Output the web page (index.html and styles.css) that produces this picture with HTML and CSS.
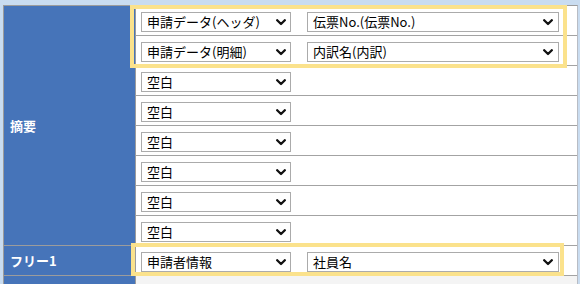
FILE: index.html
```html
<!DOCTYPE html>
<html lang="ja">
<head>
<meta charset="utf-8">
<link rel="stylesheet" href="styles.css">
</head>
<body>
<div class="page">
  <div class="sheet">
    <div class="label span8">摘要</div>
    <div class="cell">
      <div class="sel w1"><span>申請データ(ヘッダ)</span><svg class="chev" viewBox="0 0 10 7" width="10" height="7"><polyline points="1.2,1.2 5,5 8.8,1.2"/></svg></div>
      <div class="sel w2"><span>伝票No.(伝票No.)</span><svg class="chev" viewBox="0 0 10 7" width="10" height="7"><polyline points="1.2,1.2 5,5 8.8,1.2"/></svg></div>
    </div>
    <div class="cell">
      <div class="sel w1"><span>申請データ(明細)</span><svg class="chev" viewBox="0 0 10 7" width="10" height="7"><polyline points="1.2,1.2 5,5 8.8,1.2"/></svg></div>
      <div class="sel w2"><span>内訳名(内訳)</span><svg class="chev" viewBox="0 0 10 7" width="10" height="7"><polyline points="1.2,1.2 5,5 8.8,1.2"/></svg></div>
    </div>
    <div class="cell">
      <div class="sel w1"><span>空白</span><svg class="chev" viewBox="0 0 10 7" width="10" height="7"><polyline points="1.2,1.2 5,5 8.8,1.2"/></svg></div>
    </div>
    <div class="cell">
      <div class="sel w1"><span>空白</span><svg class="chev" viewBox="0 0 10 7" width="10" height="7"><polyline points="1.2,1.2 5,5 8.8,1.2"/></svg></div>
    </div>
    <div class="cell">
      <div class="sel w1"><span>空白</span><svg class="chev" viewBox="0 0 10 7" width="10" height="7"><polyline points="1.2,1.2 5,5 8.8,1.2"/></svg></div>
    </div>
    <div class="cell">
      <div class="sel w1"><span>空白</span><svg class="chev" viewBox="0 0 10 7" width="10" height="7"><polyline points="1.2,1.2 5,5 8.8,1.2"/></svg></div>
    </div>
    <div class="cell">
      <div class="sel w1"><span>空白</span><svg class="chev" viewBox="0 0 10 7" width="10" height="7"><polyline points="1.2,1.2 5,5 8.8,1.2"/></svg></div>
    </div>
    <div class="cell">
      <div class="sel w1"><span>空白</span><svg class="chev" viewBox="0 0 10 7" width="10" height="7"><polyline points="1.2,1.2 5,5 8.8,1.2"/></svg></div>
    </div>
    <div class="label">フリー1</div>
    <div class="cell">
      <div class="sel w1"><span>申請者情報</span><svg class="chev" viewBox="0 0 10 7" width="10" height="7"><polyline points="1.2,1.2 5,5 8.8,1.2"/></svg></div>
      <div class="sel w2"><span>社員名</span><svg class="chev" viewBox="0 0 10 7" width="10" height="7"><polyline points="1.2,1.2 5,5 8.8,1.2"/></svg></div>
    </div>
    <div class="label tail"></div>
    <div class="cell empty"></div>
  </div>
  <div class="hl hl1"></div>
  <div class="hl hl2"></div>
</div>
</body>
</html>
```

FILE: styles.css
```css
html, body {
  margin: 0;
  padding: 0;
}
body {
  background: #c9dcf0;
  font-family: "Noto Sans CJK JP", "Noto Sans", sans-serif;
  font-size: 13px;
  color: #111;
  overflow: hidden;
}
.page {
  position: relative;
  padding: 5px 2px 0 3px;
  height: 284px;
  box-sizing: border-box;
  overflow: hidden;
}
.sheet {
  display: grid;
  grid-template-columns: 132px 1fr;
  grid-template-rows: repeat(9, 30px) 9px;
  width: 575px;
  box-sizing: border-box;
  border-top: 1px solid #9c9c9c;
  border-left: 1px solid #9c9c9c;
  border-right: 1px solid #b8bcc4;
  background: #fff;
}
.label {
  background: #4674b9;
  color: #fff;
  font-weight: bold;
  display: flex;
  align-items: center;
  padding-left: 6px;
  border-right: 1px solid #9c9c9c;
  border-bottom: 1px solid #9c9c9c;
  box-sizing: border-box;
}
.label.tail {
  border-bottom: none;
}
.span8 {
  grid-row: span 8;
}
.cell {
  display: flex;
  align-items: flex-start;
  gap: 16px;
  padding: 6px 0 0 5px;
  border-bottom: 1px solid #a3a3a3;
  box-sizing: border-box;
}
.cell.empty {
  background: #f4f4f4;
  border-bottom: none;
  padding: 0;
}
.sel {
  height: 20px;
  box-sizing: border-box;
  border: 1px solid #ababab;
  background: #fff;
  display: flex;
  align-items: center;
  justify-content: space-between;
  padding: 0 4px 0 5px;
  line-height: 18px;
  color: #000;
}
.w1 { width: 150px; }
.w2 { width: 252px; }
.w2 .chev { margin-right: 1px; }
.chev {
  flex: none;
}
.chev polyline {
  fill: none;
  stroke: #111;
  stroke-width: 2.3;
  stroke-linecap: round;
  stroke-linejoin: round;
}
.hl {
  position: absolute;
  border: 4px solid #fbe28c;
  box-sizing: border-box;
  pointer-events: none;
}
.hl1 {
  left: 130px;
  top: 5px;
  width: 437px;
  height: 63px;
}
.hl2 {
  left: 131px;
  top: 243px;
  width: 433px;
  height: 33px;
}
```
